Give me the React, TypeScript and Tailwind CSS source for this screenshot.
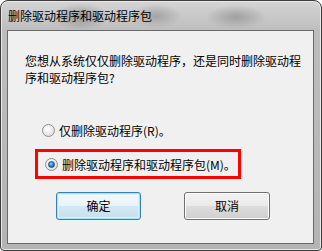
import React from "react";

const font = "font-['Microsoft_YaHei','Noto_Sans_CJK_SC',sans-serif]";

function Radio({ checked }: { checked?: boolean }) {
  return (
    <div className="w-[13px] h-[13px] rounded-full border border-[#8f8f8f] bg-[radial-gradient(circle_at_40%_35%,#ffffff,#e6e6e6_60%,#cfcfcf)] flex items-center justify-center shrink-0">
      {checked && (
        <div className="w-[7px] h-[7px] rounded-full bg-[radial-gradient(circle_at_40%_35%,#8fd3ff,#1f7fd0_55%,#0a3d7a)] border border-[#1a4f86]" />
      )}
    </div>
  );
}

export default function App() {
  return (
    <div className={`w-[322px] h-[251px] bg-white ${font}`}>
      <div className="w-[322px] h-[251px] rounded-t-[8px] rounded-b-[4px] border border-[#3d3d3d] bg-[radial-gradient(ellipse_28px_14px_at_80px_16px,#9a9a9a,transparent),radial-gradient(ellipse_26px_12px_at_155px_15px,#a4a4a4,transparent),radial-gradient(ellipse_30px_12px_at_235px_16px,#a0a0a0,transparent),linear-gradient(to_bottom,#d4d4d4,#bdbdbd_30px,#b4b4b4)] flex flex-col shadow-[inset_0_0_0_1px_#e8e8e8]">
        <div className="h-[29px] flex items-center pl-[7px] text-[12px] text-black leading-none tracking-[0px]">
          删除驱动程序和驱动程序包
        </div>
        <div className="ml-[6px] mr-[7px] mb-[6px] flex-1 border border-[#6a6a6a] bg-[#f0f0f0] flex flex-col text-[12px] text-black">
          <p className="mt-[21px] ml-[17px] mr-[6px] leading-[17px]">
            您想从系统仅仅删除驱动程序，还是同时删除驱动程序和驱动程序包?
          </p>
          <div className="mt-[36px] ml-[34px] flex items-center gap-[4px] h-[17px]">
            <Radio />
            <span className="leading-[17px]">仅删除驱动程序(R)。</span>
          </div>
          <div className="mt-[10px] ml-[27px] w-[206px] h-[30px] border-[3px] border-[#ff0000] flex items-center pl-[7px] gap-[4px]">
            <Radio checked />
            <span className="leading-[17px]">删除驱动程序和驱动程序包(M)。</span>
          </div>
          <div className="mt-[13px] flex">
            <button className="ml-[48px] w-[85px] h-[28px] rounded-[3px] border border-[#3c7fb1] shadow-[inset_0_0_0_1px_#9fe3ff,inset_0_0_0_2px_#d8f3ff] bg-[linear-gradient(to_bottom,#f4f9fc,#e8f3fa_50%,#d3e7f3_50%,#c6e0ef)] text-[12px] text-black">
              确定
            </button>
            <button className="ml-[43px] w-[86px] h-[28px] rounded-[3px] border border-[#707070] shadow-[inset_0_0_0_1px_#fcfcfc] bg-[linear-gradient(to_bottom,#f2f2f2,#ebebeb_50%,#dddddd_50%,#cfcfcf)] text-[12px] text-black">
              取消
            </button>
          </div>
        </div>
      </div>
    </div>
  );
}
